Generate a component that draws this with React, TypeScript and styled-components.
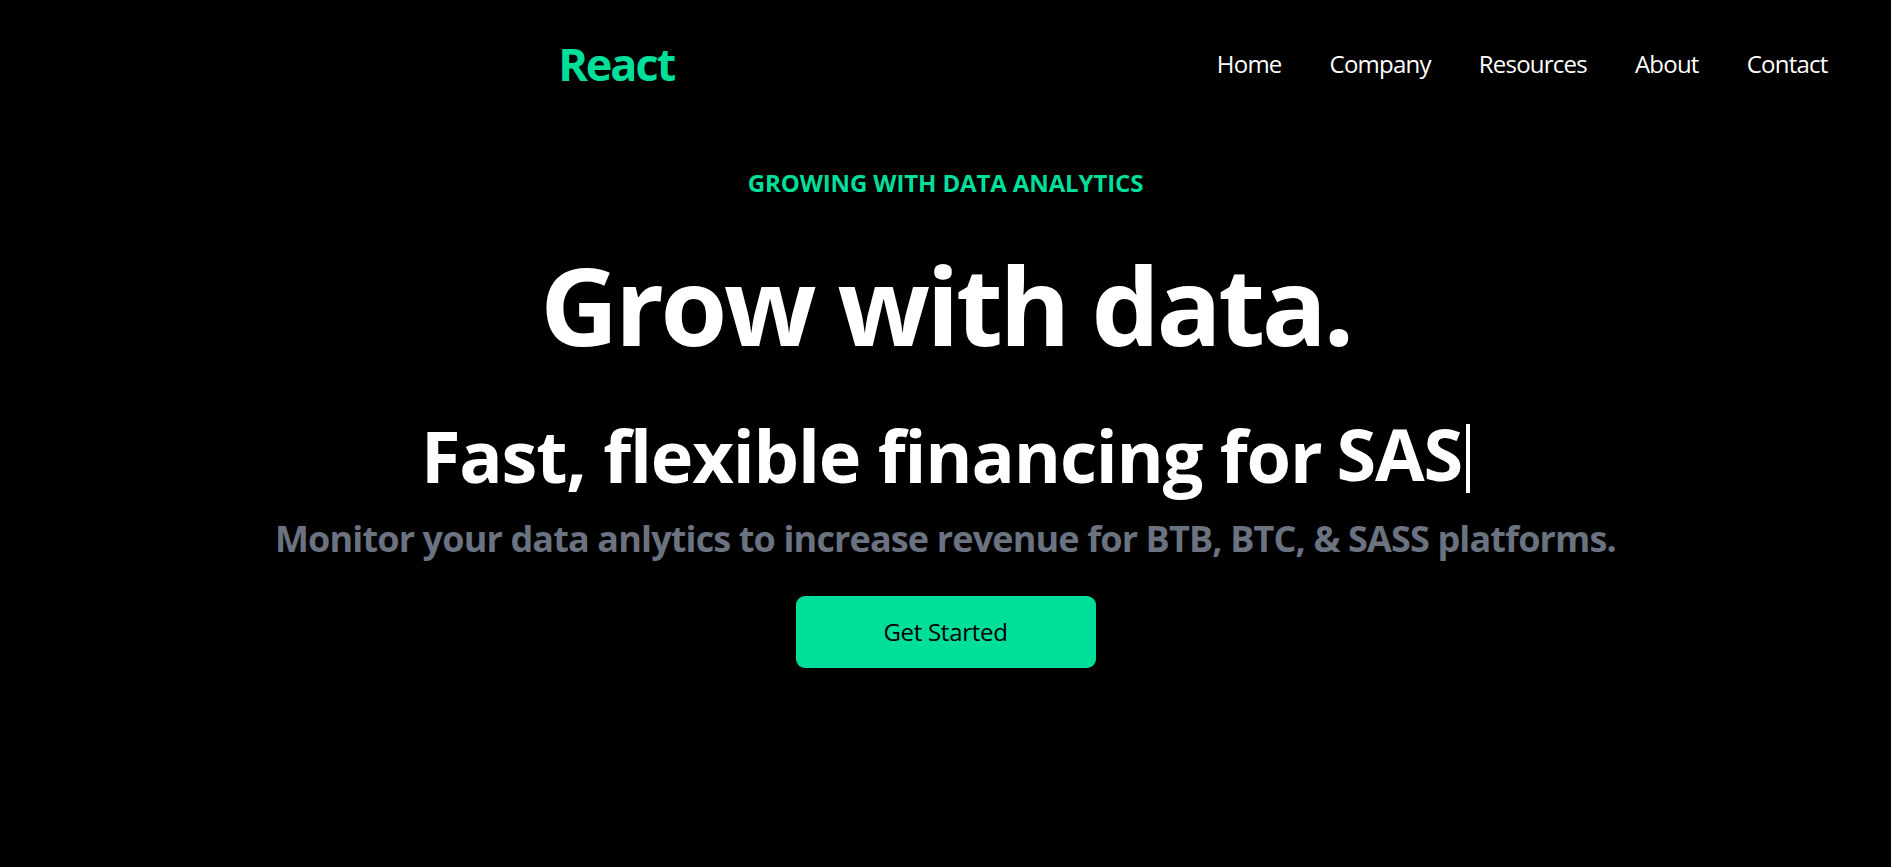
import React from "react";
import styled, { createGlobalStyle } from "styled-components";

const GlobalStyle = createGlobalStyle`
  html, body {
    margin: 0;
    padding: 0;
    background: #000000;
  }
  body {
    font-family: "Open Sans", "Noto Sans", sans-serif;
    color: #ffffff;
  }
  * { box-sizing: border-box; }
`;

const Nav = styled.nav`
  display: flex;
  justify-content: space-between;
  align-items: center;
  height: 144px;
  max-width: 1860px;
  margin: 0 auto;
  padding: 0 24px 17px;
  color: #ffffff;
`;

const Logo = styled.h1`
  width: 100%;
  margin: 0;
  text-align: center;
  font-size: 45px;
  line-height: 54px;
  font-weight: 700;
  letter-spacing: -0.045em;
  color: #00df9a;
`;

const Menu = styled.ul`
  display: flex;
  list-style: none;
  margin: 0;
  padding: 0;
`;

const MenuItem = styled.li`
  padding: 24px;
  font-size: 24px;
  line-height: 36px;
  letter-spacing: -0.032em;
  white-space: nowrap;
`;

const Hero = styled.section`
  max-width: 1200px;
  width: 100%;
  height: 867px;
  margin: -144px auto 0;
  padding-top: 155px;
  text-align: center;
  display: flex;
  flex-direction: column;
  justify-content: flex-start;
`;

const Eyebrow = styled.p`
  margin: 0;
  padding: 10px 12px 14px;
  color: #00df9a;
  font-weight: 700;
  font-size: 24px;
  line-height: 36px;
  letter-spacing: -0.005em;
`;

const Headline = styled.h1`
  margin: 0;
  padding: 36px 0;
  font-size: 108px;
  line-height: 108px;
  font-weight: 700;
  letter-spacing: -0.032em;
  white-space: nowrap;
`;

const TypedRow = styled.div`
  display: flex;
  justify-content: center;
  align-items: center;
  white-space: nowrap;
`;

const SubHead = styled.p`
  margin: 0;
  padding: 24px 0;
  font-size: 72px;
  line-height: 72px;
  font-weight: 700;
  letter-spacing: -0.016em;
`;

const TypedWord = styled.span`
  padding-left: 15px;
  font-size: 72px;
  line-height: 72px;
  font-weight: 700;
  letter-spacing: -0.016em;
`;

const Cursor = styled.span`
  display: inline-block;
  width: 4px;
  height: 69px;
  margin-left: 4px;
  vertical-align: -12px;
  background: #ffffff;
`;

const Lead = styled.p`
  margin: 0 -200px;
  font-size: 36px;
  line-height: 48px;
  font-weight: 700;
  letter-spacing: -0.024em;
  color: #6b7280;
  white-space: nowrap;
`;

const CTA = styled.button`
  width: 300px;
  margin: 33px auto 36px;
  padding: 18px 0;
  border: none;
  border-radius: 9px;
  background: #00df9a;
  color: #000000;
  font-family: inherit;
  font-size: 24px;
  line-height: 36px;
  font-weight: 500;
  letter-spacing: -0.012em;
  cursor: pointer;
`;

const links = ["Home", "Company", "Resources", "About", "Contact"];

export default function App() {
  return (
    <>
      <GlobalStyle />
      <Nav>
        <Logo>React</Logo>
        <Menu>
          {links.map((l) => (
            <MenuItem key={l}>{l}</MenuItem>
          ))}
        </Menu>
      </Nav>
      <Hero>
        <Eyebrow>GROWING WITH DATA ANALYTICS</Eyebrow>
        <Headline>Grow with data.</Headline>
        <TypedRow>
          <SubHead>Fast, flexible financing for</SubHead>
          <TypedWord>
            SAS
            <Cursor aria-hidden="true" />
          </TypedWord>
        </TypedRow>
        <Lead>Monitor your data anlytics to increase revenue for BTB, BTC, &amp; SASS platforms.</Lead>
        <CTA>Get Started</CTA>
      </Hero>
    </>
  );
}
